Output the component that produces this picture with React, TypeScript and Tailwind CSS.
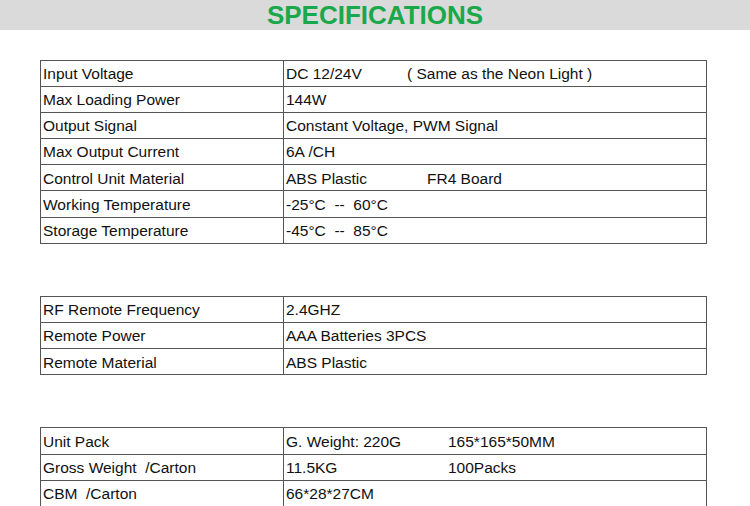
import React from "react";

type Row = { label: string; value: React.ReactNode };

const Cell2 = ({ a, b, w }: { a: string; b: string; w: string }) => (
  <span className="whitespace-pre">
    <span className={`inline-block ${w}`}>{a}</span>
    {b}
  </span>
);

const t1: Row[] = [
  { label: "Input Voltage", value: <Cell2 a="DC 12/24V" b="( Same as the Neon Light )" w="w-[121px]" /> },
  { label: "Max Loading Power", value: "144W" },
  { label: "Output Signal", value: "Constant Voltage, PWM Signal" },
  { label: "Max Output Current", value: "6A /CH" },
  { label: "Control Unit Material", value: <Cell2 a="ABS Plastic" b="FR4 Board" w="w-[141px]" /> },
  { label: "Working Temperature", value: "-25°C  --  60°C" },
  { label: "Storage Temperature", value: "-45°C  --  85°C" },
];

const t2: Row[] = [
  { label: "RF Remote Frequency", value: "2.4GHZ" },
  { label: "Remote Power", value: "AAA Batteries 3PCS" },
  { label: "Remote Material", value: "ABS Plastic" },
];

const t3: Row[] = [
  { label: "Unit Pack", value: <Cell2 a="G. Weight: 220G" b="165*165*50MM" w="w-[162px]" /> },
  { label: "Gross Weight  /Carton", value: <Cell2 a="11.5KG" b="100Packs" w="w-[162px]" /> },
  { label: "CBM  /Carton", value: "66*28*27CM" },
];

function Table({ rows, className }: { rows: Row[]; className?: string }) {
  return (
    <div className={`ml-[40px] w-[667px] border-t border-l border-[#555] ${className ?? ""}`}>
      {rows.map((r, i) => (
        <div key={i} className="flex h-[26.2px]">
          <div className="w-[243px] shrink-0 border-r border-b border-[#555] pl-[2px] pt-px flex items-center whitespace-pre">
            {r.label}
          </div>
          <div className="flex-1 border-r border-b border-[#555] pl-[2px] pt-px flex items-center whitespace-pre">
            {r.value}
          </div>
        </div>
      ))}
    </div>
  );
}

export default function App() {
  return (
    <div
      className="w-[750px] h-[506px] overflow-hidden bg-white text-[15.5px] leading-none text-[#111]"
      style={{ fontFamily: '"Liberation Sans", Arial, sans-serif' }}
    >
      <div className="h-[30px] bg-[#dadada] flex items-center justify-center">
        <span className="text-[26px] font-bold text-[#19a84a] leading-none">SPECIFICATIONS</span>
      </div>
      <Table rows={t1} className="mt-[29.5px]" />
      <Table rows={t2} className="mt-[52px]" />
      <Table rows={t3} className="mt-[52px]" />
    </div>
  );
}
